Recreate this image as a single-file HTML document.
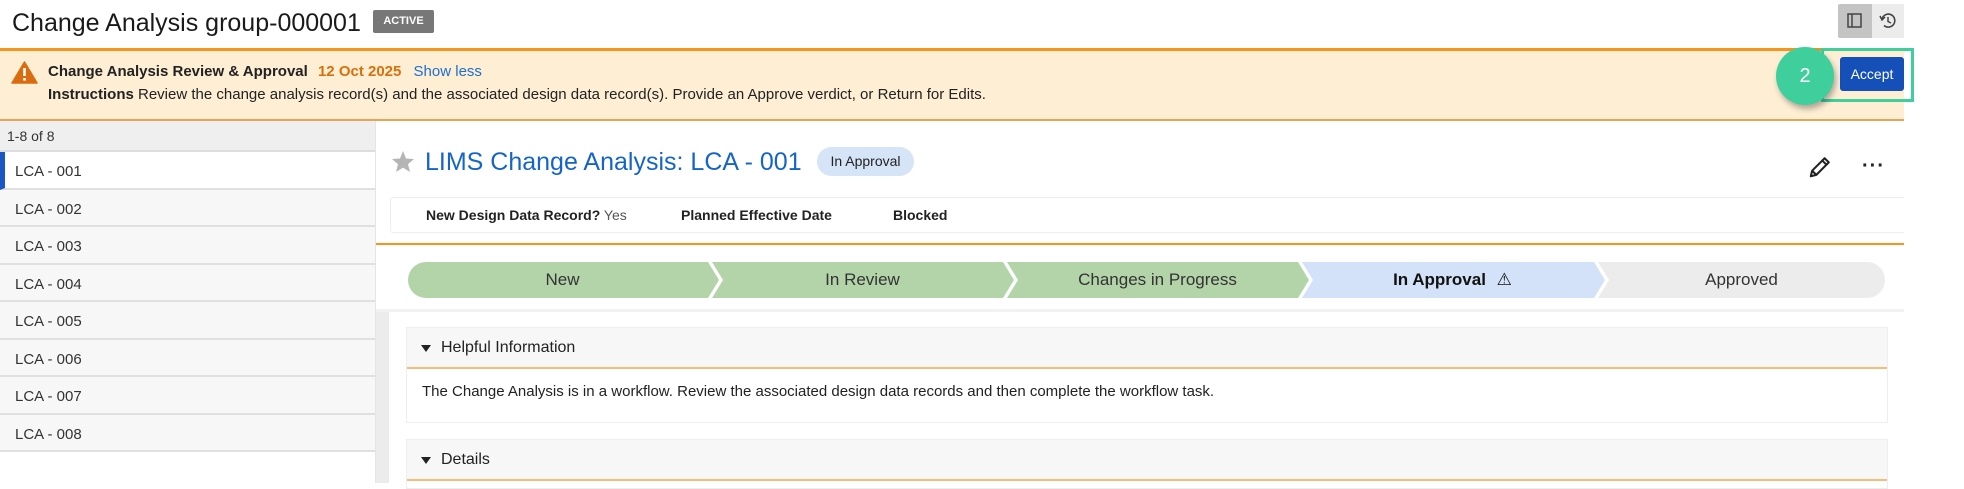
<!DOCTYPE html>
<html><head><style>
*{box-sizing:border-box;margin:0;padding:0}
body{width:1964px;height:483px;overflow:hidden;background:#fff;font-family:"Liberation Sans",Arial,sans-serif;color:#222;position:relative}
.a{position:absolute}
.title{left:12px;top:9px;font-size:25px;color:#1a1a1a;white-space:nowrap}
.badge{left:373px;top:10px;width:61px;height:23px;background:#777;color:#fff;font-size:11px;font-weight:bold;text-align:center;line-height:23px;border-radius:2px}
.banner{left:0;top:48px;width:1904px;height:73px;background:#fdeed4;border-top:3px solid #f7941d;border-bottom:2px solid #e8a35a}
.b1{left:48px;top:63px;font-size:15px;font-weight:bold;white-space:nowrap}
.b2{left:48px;top:86px;font-size:15px;white-space:nowrap}
.list{left:0;top:121px;width:375px}
.lh{height:31px;background:#efefef;border-bottom:2px solid #ddd;font-size:14px;line-height:30px;padding-left:7px;color:#333}
.li{height:37.5px;background:#f7f7f7;border-bottom:2px solid #e0e0e0;font-size:15px;line-height:39px;padding-left:15px;color:#333}
.li.sel{background:#fff;border-left:5px solid #1a56c4;padding-left:10px}
.step{top:262px;height:35px;font-size:17px;line-height:35px;text-align:center;color:#333}
.panel{left:406px;width:1482px;background:#fff;border:1px solid #eee}
.ph{background:#f7f7f7;height:41px;border-bottom:2px solid #f5bd78;font-size:16px;line-height:40px;padding-left:34px;position:relative}
.ph:before{content:"";position:absolute;left:14px;top:17px;border-left:5px solid transparent;border-right:5px solid transparent;border-top:7px solid #222}
</style></head><body>
<div class="a title">Change Analysis group-000001</div>
<div class="a badge">ACTIVE</div>
<div class="a" style="left:1838px;top:4px;width:34px;height:34px;background:#c4c4c4;border-radius:2px 0 0 2px"></div>
<div class="a" style="left:1872px;top:4px;width:32px;height:34px;background:#ececec"></div>
<svg class="a" style="left:1845px;top:12px" width="20" height="18" viewBox="0 0 20 18"><rect x="3" y="2" width="13" height="13" fill="none" stroke="#444" stroke-width="1.5"/><line x1="7" y1="2" x2="7" y2="15" stroke="#444" stroke-width="1.5"/></svg>
<svg class="a" style="left:1878px;top:11px" width="20" height="20" viewBox="0 0 20 20"><path d="M4 8 A6.5 6.5 0 1 1 6 14.5" fill="none" stroke="#444" stroke-width="1.6"/><path d="M2 5 L4 9 L7 6" fill="none" stroke="#444" stroke-width="1.5"/><path d="M10 6 V10.5 L13 12" fill="none" stroke="#444" stroke-width="1.5"/></svg>
<div class="a banner"></div>
<svg class="a" style="left:11px;top:61px" width="27" height="23" viewBox="0 0 27 23"><path d="M13.5 1 L26 22 H1 Z" fill="#d86c0f" stroke="#d86c0f" stroke-linejoin="round" stroke-width="1.5"/><rect x="12.2" y="7" width="2.6" height="8" fill="#fff"/><rect x="12.2" y="17" width="2.6" height="2.6" fill="#fff"/></svg>
<div class="a b1">Change Analysis Review &amp; Approval <span style="color:#d8700a;margin-left:6px">12 Oct 2025</span> <span style="color:#1d6fd1;font-weight:normal;margin-left:8px">Show less</span></div>
<div class="a b2"><b>Instructions</b> Review the change analysis record(s) and the associated design data record(s). Provide an Approve verdict, or Return for Edits.</div>
<div class="a" style="left:1821px;top:48px;width:93px;height:54px;border:3px solid #3fcf9c"></div>
<div class="a" style="left:1840px;top:57px;width:64px;height:34px;background:#1550b8;border-radius:3px;color:#fff;font-size:14px;text-align:center;line-height:34px">Accept</div>
<div class="a" style="left:1776px;top:47px;width:58px;height:58px;border-radius:50%;background:#3fcf9c;box-shadow:2px 4px 6px rgba(0,0,0,.3);color:#fff;font-size:20px;text-align:center;line-height:58px">2</div>
<div class="a list">
<div class="lh">1-8 of 8</div>
<div class="li sel">LCA - 001</div><div class="li">LCA - 002</div><div class="li">LCA - 003</div><div class="li">LCA - 004</div><div class="li">LCA - 005</div><div class="li">LCA - 006</div><div class="li">LCA - 007</div><div class="li">LCA - 008</div>
</div>
<div class="a" style="left:375px;top:121px;width:1px;height:362px;background:#e5e5e5"></div>
<div class="a" style="left:376px;top:311px;width:13px;height:172px;background:#ececec"></div>
<svg class="a" style="left:391px;top:150px" width="24" height="23" viewBox="0 0 24 23"><path d="M12 1 L15 8.5 L23 9 L17 14.2 L19 22 L12 17.6 L5 22 L7 14.2 L1 9 L9 8.5 Z" fill="#b5b5b5"/></svg>
<div class="a" style="left:425px;top:148px;font-size:25px;color:#1565c8;white-space:nowrap">LIMS Change Analysis: LCA - 001</div>
<div class="a" style="left:817px;top:147px;width:97px;height:29px;background:#d6e4f8;border-radius:15px;font-size:14px;text-align:center;line-height:29px;color:#222">In Approval</div>
<svg class="a" style="left:1808px;top:155px" width="24" height="24" viewBox="0 0 26 26"><path d="M3 23 L4.5 17 L18 3.5 L22.5 8 L9 21.5 Z M15.5 6 L20 10.5 M4.5 17 L9 21.5" fill="none" stroke="#222" stroke-width="2.2" stroke-linejoin="round"/></svg>
<div class="a" style="left:1862px;top:155px;font-size:20px;font-weight:bold;letter-spacing:1px">···</div>
<div class="a" style="left:390px;top:197px;width:1514px;height:36px;border:1px solid #eee;border-right:none;border-radius:3px 0 0 3px"></div>
<div class="a" style="left:426px;top:207px;font-size:14px;white-space:nowrap"><b>New Design Data Record?</b> <span style="color:#555">Yes</span></div>
<div class="a" style="left:681px;top:207px;font-size:14px;font-weight:bold">Planned Effective Date</div>
<div class="a" style="left:893px;top:207px;font-size:14px;font-weight:bold">Blocked</div>
<div class="a" style="left:376px;top:243px;width:1528px;height:2px;background:#f7941d"></div>
<svg class="a" style="left:408px;top:261px" width="1478" height="38" viewBox="0 0 1478 38">
<path d="M18 1 H300 L311 19 L300 37 H18 A18 18 0 0 1 18 1 Z" fill="#b3d3a8"/>
<path d="M304 1 H595 L606 19 L595 37 H304 L315 19 Z" fill="#b3d3a8"/>
<path d="M599 1 H890 L901 19 L890 37 H599 L610 19 Z" fill="#b3d3a8"/>
<path d="M894 1 H1186 L1197 19 L1186 37 H894 L905 19 Z" fill="#d3e2f8"/>
<path d="M1190 1 H1459 A18 18 0 0 1 1459 37 H1190 L1201 19 Z" fill="#ececec"/>
</svg>
<div class="a step" style="left:410px;width:305px">New</div>
<div class="a step" style="left:715px;width:295px">In Review</div>
<div class="a step" style="left:1010px;width:295px">Changes in Progress</div>
<div class="a step" style="left:1305px;width:295px;font-weight:bold;color:#111">In Approval <span style="font-weight:normal;margin-left:6px">⚠</span></div>
<div class="a step" style="left:1600px;width:283px">Approved</div>
<div class="a" style="left:376px;top:309px;width:1528px;height:3px;background:#f2f2f2"></div>
<div class="a panel" style="top:327px;height:96px">
<div class="ph">Helpful Information</div>
<div style="font-size:15px;padding:14px 0 0 15px">The Change Analysis is in a workflow. Review the associated design data records and then complete the workflow task.</div>
</div>
<div class="a panel" style="top:439px;height:50px">
<div class="ph">Details</div>
</div>
</body></html>
